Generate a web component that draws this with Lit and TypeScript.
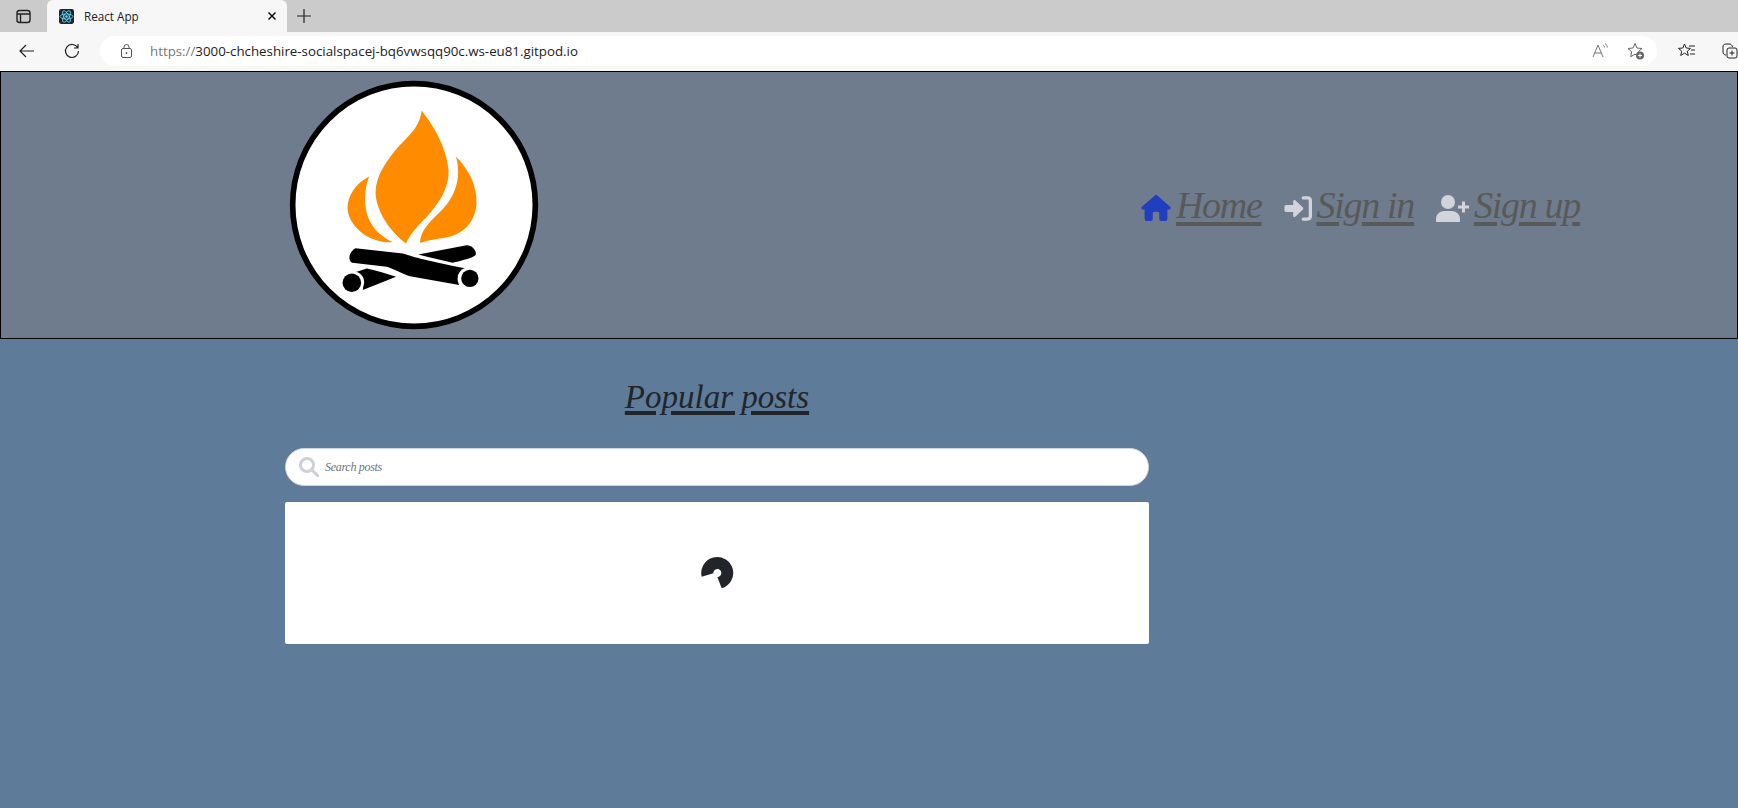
import { LitElement, html, css, svg } from "lit";
import { customElement } from "lit/decorators.js";

const logo = svg`<svg class="logo" viewBox="56 28 752 752" aria-label="logo">
  <circle cx="432" cy="404" r="365" fill="#fff" stroke="#000" stroke-width="17" />
  <g fill="#ff8c00">
    <path d="M455 120C490 165 530 230 536 300C538 350 510 395 470 440C445 465 420 490 408 520C370 490 330 445 318 385C310 335 335 290 375 240C415 195 448 175 455 120Z" />
    <path d="M297 318C255 340 232 375 232 415C236 470 300 520 368 516C325 495 297 465 288 420C282 385 285 350 297 318Z" />
    <path d="M558 258C600 300 622 350 620 400C615 465 570 498 510 505C490 508 470 512 450 518C450 480 485 450 515 420C560 375 575 315 558 258Z" />
  </g>
  <g fill="#000">
    <path d="M445 553L590 525C605 524 620 540 618 552C615 560 600 565 548 578C515 570 480 562 445 553Z" />
    <path d="M255 606L290 595C320 600 350 612 378 620L278 660C282 640 275 620 255 606Z" />
    <circle cx="250" cy="636" r="32" fill="#fff" />
    <circle cx="245" cy="638" r="28" />
    <path d="M256 534L398 550C420 556 440 566 590 595C572 605 560 625 568 645L420 618C395 612 375 597 350 590L246 578C232 570 236 545 256 534Z" />
    <circle cx="596" cy="625" r="33" fill="#fff" />
    <circle cx="600" cy="625" r="26" />
  </g>
</svg>`;

const homeIcon = svg`<svg class="nav-icon" width="30" height="26" viewBox="0 0 576 512"><path fill="#1f3fbf" d="M575.8 255.500c0 18-15 32.100-32 32.100h-32l.7 160.200c0 2.700-.2 5.400-.5 8.100V472c0 22.100-17.900 40-40 40H456c-1.100 0-2.200 0-3.300-.1-1.400.1-2.800.1-4.200.1H392c-22.100 0-40-17.900-40-40V360c0-17.700-14.300-32-32-32H256c-17.700 0-32 14.300-32 32V472c0 22.100-17.900 40-40 40H128.100c-1.500 0-3-.1-4.500-.2-1.200.1-2.400.2-3.600.2H104c-22.100 0-40-17.900-40-40V360c0-.9 0-1.900.1-2.800V287.600H32c-18 0-32-14-32-32.100 0-9 3-17 10-24L266.400 8c7-7 15-8 22-8s15 2 21 7L564.800 231.500c8 7 12 15 11 24z"/></svg>`;

const signInIcon = svg`<svg class="nav-icon" width="28" height="25" viewBox="0 0 512 448"><path fill="#d3d3da" d="M352 224c0 9-3.700 17.500-10.100 23.500L205.900 375c-6.500 6.100-15.900 7.700-24 4.200-8.100-3.500-13.900-11.500-13.900-20.200v-71H40c-17.700 0-32-14.300-32-32v-64c0-17.700 14.300-32 32-32h128V89c0-8.700 5.800-16.700 13.900-20.200 8.100-3.500 17.500-1.900 24 4.200l136 127.500c6.400 6 10.100 14.500 10.100 23.500z"/><path fill="none" stroke="#d3d3da" stroke-width="60" stroke-linecap="round" d="M352 30h75c33 0 55 22 55 55v278c0 33-22 55-55 55h-75"/></svg>`;

const signUpIcon = svg`<svg class="nav-icon" width="33" height="27" viewBox="0 0 33 27"><circle cx="12" cy="7" r="7" fill="#d3d3da"/><path fill="#d3d3da" d="M0 26v-2c0-5.500 4.500-8 9-8h6c4.500 0 9 2.500 9 8v2c0 .6-.4 1-1 1H1c-.6 0-1-.4-1-1z"/><path fill="none" stroke="#d3d3da" stroke-width="3" d="M22 12h11M27.500 6.500v11"/></svg>`;

@customElement("app-root")
export class AppRoot extends LitElement {
  static styles = css`
    :host {
      display: block;
      height: 808px;
      overflow: hidden;
      background: #5e7b9a;
      font-family: "Liberation Serif", serif;
    }

    .tabbar {
      height: 32px;
      background: #cbcbcb;
      display: flex;
      align-items: flex-end;
      padding-left: 15px;
    }

    .tabbar .panes {
      margin-right: 15px;
      margin-bottom: 7px;
    }

    .tab {
      width: 240px;
      height: 32px;
      box-sizing: border-box;
      background: #f7f7f7;
      border-radius: 6px 6px 0 0;
      display: flex;
      align-items: center;
      padding: 0 10px 0 12px;
      font: 11.700px "Open Sans", sans-serif;
      color: #222;
    }

    .favicon {
      width: 15px;
      height: 15px;
      margin-right: 10px;
      flex: none;
    }

    .tab .label {
      flex: 1;
    }

    .newtab {
      margin: 0 0 9px 10px;
    }

    .toolbar {
      height: 39px;
      box-sizing: border-box;
      background: #f7f7f7;
      display: flex;
      align-items: center;
      padding: 0 0 2px 19px;
    }

    .back {
      margin-right: 29px;
    }

    .urlbar {
      width: 1557px;
      height: 30px;
      flex: none;
      margin-left: 20px;
      background: #fff;
      border-radius: 15px;
      display: flex;
      align-items: center;
      padding: 0 12px 0 21px;
      box-sizing: border-box;
      font: 13.300px "Open Sans", sans-serif;
      color: #222;
    }

    .url {
      margin-left: 18px;
      flex: 1;
    }

    .url span {
      color: #777;
    }

    .urlbar .read {
      margin-right: 19px;
    }

    .toolbar .favs {
      margin-left: 21px;
      flex: none;
    }

    .toolbar .coll {
      margin-left: 26px;
      flex: none;
    }

    header {
      height: 266px;
      background: #6f7c8d;
      border: 1px solid #000;
      display: flex;
      justify-content: space-between;
      align-items: center;
      padding: 0 157px 0 288px;
    }

    .logo {
      width: 250px;
      height: 250px;
      display: block;
    }

    nav {
      display: flex;
      align-items: center;
      gap: 22px;
    }

    .nav-item {
      display: flex;
      align-items: center;
      gap: 5px;
      font-size: 38px;
      font-style: italic;
      letter-spacing: -1.300px;
      color: #595959;
      text-decoration: underline;
      text-decoration-thickness: 4px;
      text-underline-offset: 4px;
    }

    .nav-icon {
      flex: none;
      margin-top: 6px;
    }

    main {
      width: 864px;
      margin-left: 285px;
      padding-top: 36px;
      display: flex;
      flex-direction: column;
    }

    h1 {
      margin: 0 0 28px;
      text-align: center;
      font-size: 33px;
      line-height: 45px;
      font-weight: 400;
      font-style: italic;
      color: #212529;
      text-decoration: underline;
      text-decoration-thickness: 4px;
      text-underline-offset: 3px;
    }

    .search {
      height: 38px;
      box-sizing: border-box;
      background: #fff;
      border: 1px solid #ced4da;
      border-radius: 19px;
      display: flex;
      align-items: center;
      padding-left: 13px;
      gap: 6px;
    }

    .search input {
      flex: 1;
      border: 0;
      outline: 0;
      padding: 0;
      background: none;
      font: italic 12px "Liberation Serif", serif;
      letter-spacing: -0.300px;
    }

    .search input::placeholder {
      color: #6c757d;
      opacity: 1;
    }

    .card {
      margin-top: 16px;
      height: 142px;
      background: #fff;
      border-radius: 2px;
      display: flex;
      align-items: center;
      justify-content: center;
    }

    .card svg {
      margin-bottom: 2px;
    }
  `;

  render() {
    return html`
      <div class="tabbar">
        <svg class="panes" width="17" height="17" viewBox="0 0 17 17" fill="none" stroke="#222" stroke-width="1.400">
          <rect x="2" y="2.500" width="13" height="12" rx="2.500" />
          <path d="M2 6h13M5.500 6v8.500" />
        </svg>
        <div class="tab">
          <svg class="favicon" viewBox="0 0 14 14">
            <rect width="14" height="14" rx="2" fill="#20232a" />
            <g fill="none" stroke="#61dafb" stroke-width=".8">
              <ellipse cx="7" cy="7" rx="6" ry="2.400" />
              <ellipse cx="7" cy="7" rx="6" ry="2.400" transform="rotate(60 7 7)" />
              <ellipse cx="7" cy="7" rx="6" ry="2.400" transform="rotate(120 7 7)" />
            </g>
            <circle cx="7" cy="7" r="1.200" fill="#61dafb" />
          </svg>
          <span class="label">React App</span>
          <svg width="10" height="10" viewBox="0 0 10 10" stroke="#111" stroke-width="1.500">
            <path d="M1.500 1.500l7 7M8.500 1.500l-7 7" />
          </svg>
        </div>
        <svg class="newtab" width="14" height="14" viewBox="0 0 14 14" stroke="#222" stroke-width="1.200">
          <path d="M7 0v14M0 7h14" />
        </svg>
      </div>
      <div class="toolbar">
        <svg class="back" width="16" height="14" viewBox="0 0 16 14" fill="none" stroke="#222" stroke-width="1.200">
          <path d="M15 7H1M7 1L1 7l6 6" />
        </svg>
        <svg width="16" height="16" viewBox="0 0 16 16" fill="none" stroke="#222" stroke-width="1.200">
          <path d="M13.500 4.500A6.500 6.500 0 1 0 14.500 8M14 1v4h-4" />
        </svg>
        <div class="urlbar">
          <svg width="11" height="14" viewBox="0 0 11 14" fill="none" stroke="#555" stroke-width="1">
            <rect x=".5" y="4.500" width="10" height="9" rx="1.500" />
            <path d="M3 4.500V3a2.500 2.500 0 0 1 5 0v1.500" />
            <circle cx="5.500" cy="9" r=".6" fill="#555" />
          </svg>
          <div class="url"><span>https://</span>3000-chcheshire-socialspacej-bq6vwsqq90c.ws-eu81.gitpod.io</div>
          <svg class="read" width="16" height="15" viewBox="0 0 16 15" fill="none" stroke="#777" stroke-width="1">
            <path d="M1 14L6 2l5 12M2.800 10h6.400M11 2c1 .6 1.500 1.500 1.500 2.500M13 .5c1.500 1 2.300 2.400 2.300 4" />
          </svg>
          <svg class="fav" width="18" height="18" viewBox="0 0 18 18">
            <path fill="none" stroke="#666" d="M8 1.500l2 4.500 5 .5-3.700 3.300 1 4.900L8 12.200l-4.300 2.500 1-4.900L1 6.500 6 6z" />
            <circle cx="13" cy="13.500" r="4" fill="#666" />
            <path stroke="#fff" d="M13 11.500v4M11 13.500h4" />
          </svg>
        </div>
        <svg class="favs" width="18" height="16" viewBox="0 0 18 16" fill="none" stroke="#222">
          <path d="M6.500 1l1.700 4 4.300.4-3.200 2.800 1 4.300-3.800-2.300L2.700 12.500l1-4.300L.5 5.400 4.800 5zM11 3h6M13 7h4M12 11h5" />
        </svg>
        <svg class="coll" width="16" height="16" viewBox="0 0 16 16" fill="none" stroke="#222">
          <path d="M4 12C2 12 1 10.500 1 9V4c0-2 1-3 3-3h3c2 0 3 1 3.500 3" />
          <rect x="5" y="5" width="10" height="10" rx="2" />
          <path d="M10 7.500v5M7.500 10h5" />
        </svg>
      </div>
      <header>
        ${logo}
        <nav>
          <div class="nav-item">${homeIcon}<span>Home</span></div>
          <div class="nav-item">${signInIcon}<span>Sign in</span></div>
          <div class="nav-item">${signUpIcon}<span>Sign up</span></div>
        </nav>
      </header>
      <main>
        <h1>Popular posts</h1>
        <div class="search">
          <svg width="20" height="20" viewBox="0 0 20 20" fill="none" stroke="#cfcfd6" stroke-width="3">
            <circle cx="8" cy="8" r="6.500" />
            <path d="M13 13l6 6" stroke-linecap="round" />
          </svg>
          <input type="text" placeholder="Search posts" />
        </div>
        <div class="card">
          <svg width="35" height="35" viewBox="60 45 105 105">
            <path fill="#212529" d="M65 110A48 48 0 1 1 125 145L112 111A12 12 0 1 0 100 100Z" />
          </svg>
        </div>
      </main>
    `;
  }
}
